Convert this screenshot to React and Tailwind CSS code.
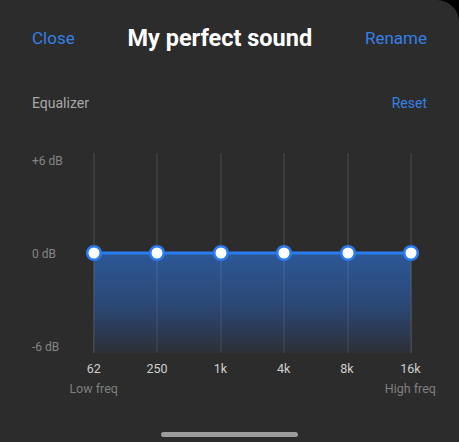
import React from "react";

const bands = ["62", "250", "1k", "4k", "8k", "16k"];
const xs = [14, 77, 141, 204, 268, 331];

const EqChart = () => {
  return (
    <svg width="345" height="212" viewBox="0 0 345 212" className="block">
      <defs>
        <linearGradient id="eqFill" x1="0" y1="0" x2="0" y2="1">
          <stop offset="0" stopColor="#2c5897" />
          <stop offset="0.55" stopColor="#2b4672" />
          <stop offset="1" stopColor="#2c2f36" />
        </linearGradient>
      </defs>
      {xs.map((x) => (
        <line key={"g" + x} x1={x} y1="5" x2={x} y2="205" stroke="#3c3c3c" strokeWidth="2" />
      ))}
      <rect x={xs[0]} y="105" width={xs[5] - xs[0]} height="100" fill="url(#eqFill)" />
      {xs.map((x) => (
        <line key={"s" + x} x1={x} y1="106" x2={x} y2="205" stroke="#ffffff" strokeOpacity="0.06" strokeWidth="2" />
      ))}
      <line x1={xs[0]} y1="105" x2={xs[5]} y2="105" stroke="#2a7af0" strokeWidth="3" />
      {xs.map((x) => (
        <circle key={"h" + x} cx={x} cy="105" r="6.8" fill="#ffffff" stroke="#2a7af0" strokeWidth="2.6" />
      ))}
    </svg>
  );
};

const App = () => {
  return (
    <div className="min-h-screen bg-black" style={{ fontFamily: "Roboto, 'Noto Sans', sans-serif" }}>
      <div className="w-[459px] h-[442px] bg-[#2c2c2c] rounded-tr-[22px] flex flex-col overflow-hidden">
        <div className="flex items-center justify-between px-8 pt-[26px] h-[52px]">
          <span className="text-[17px] text-[#3580e6]">Close</span>
          <span className="text-[23.5px] font-bold text-white">My perfect sound</span>
          <span className="text-[17px] text-[#3580e6]">Rename</span>
        </div>

        <div className="flex items-center justify-between px-8 mt-[41px] h-[20px]">
          <span className="text-[14px] text-[#a8a8a8]">Equalizer</span>
          <span className="text-[14px] text-[#3580e6]">Reset</span>
        </div>

        <div className="flex mt-[35px]">
          <div className="w-[80px] pl-8 pt-[5px] flex flex-col gap-[77px] text-[12px] leading-4 text-[#858585]">
            <span>+6 dB</span>
            <span>0 dB</span>
            <span>-6 dB</span>
          </div>
          <EqChart />
        </div>

        <div className="grid grid-cols-6 w-[380px] ml-[62px] mt-[1px] text-[12.5px] leading-4 text-[#cfcfcf]">
          {bands.map((b) => (
            <span key={b} className="text-center">{b}</span>
          ))}
        </div>
        <div className="grid grid-cols-6 w-[380px] ml-[62px] mt-[4px] text-[12.5px] leading-4 text-[#7f7f7f]">
          <span className="text-center whitespace-nowrap">Low freq</span>
          <span />
          <span />
          <span />
          <span />
          <span className="text-center whitespace-nowrap">High freq</span>
        </div>

        <div className="flex justify-center mt-auto mb-[5px]">
          <div className="w-[137px] h-[5px] rounded-full bg-[#9c9c9c]" />
        </div>
      </div>
    </div>
  );
};

export default App;
